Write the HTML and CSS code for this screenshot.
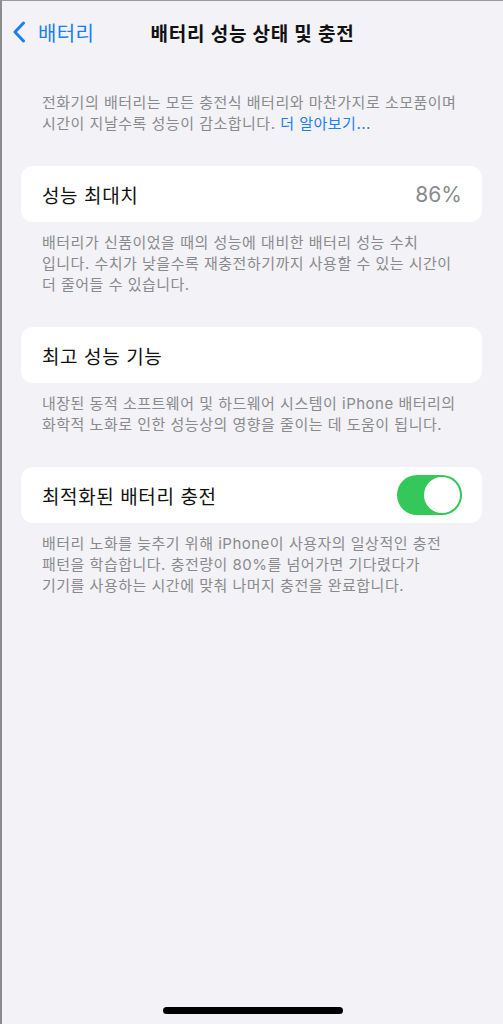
FILE: index.html
```html
<!DOCTYPE html>
<html lang="ko">
<head>
<meta charset="utf-8">
<link rel="stylesheet" href="styles.css">
</head>
<body>
<div class="screen">
  <header class="nav">
    <a class="back">
      <svg class="chev" width="14" height="22" viewBox="0 0 14 22"><path d="M11.5 2 L3 11 L11.5 20" fill="none" stroke="#1a7ff2" stroke-width="3" stroke-linecap="round" stroke-linejoin="round"/></svg>
      <span>배터리</span>
    </a>
    <h1 class="title">배터리 성능 상태 및 충전</h1>
    <div></div>
  </header>
  <main class="content">
    <p class="note intro">전화기의 배터리는 모든 충전식 배터리와 마찬가지로 소모품이며<br>시간이 지날수록 성능이 감소합니다. <span class="link">더 알아보기...</span></p>

    <div class="card">
      <span class="label">성능 최대치</span>
      <span class="value">86%</span>
    </div>
    <p class="note">배터리가 신품이었을 때의 성능에 대비한 배터리 성능 수치<br>입니다. 수치가 낮을수록 재충전하기까지 사용할 수 있는 시간이<br>더 줄어들 수 있습니다.</p>

    <div class="card">
      <span class="label">최고 성능 기능</span>
    </div>
    <p class="note">내장된 동적 소프트웨어 및 하드웨어 시스템이 iPhone 배터리의<br>화학적 노화로 인한 성능상의 영향을 줄이는 데 도움이 됩니다.</p>

    <div class="card">
      <span class="label">최적화된 배터리 충전</span>
      <span class="toggle"><span class="knob"></span></span>
    </div>
    <p class="note">배터리 노화를 늦추기 위해 iPhone이 사용자의 일상적인 충전<br>패턴을 학습합니다. 충전량이 80%를 넘어가면 기다렸다가<br>기기를 사용하는 시간에 맞춰 나머지 충전을 완료합니다.</p>
  </main>
  <div class="home"></div>
</div>
</body>
</html>
```
FILE: styles.css
```css
* { box-sizing: border-box; }
html, body { margin: 0; padding: 0; }
body {
  width: 503px;
  height: 1024px;
  overflow: hidden;
  font-family: Inter, "Noto Sans CJK KR", "Noto Sans", sans-serif;
  background: #f2f2f7;
}
.screen {
  height: 1024px;
  background: #f2f2f7;
  border-left: 2px solid #8c8c8c;
  border-top: 1px solid #9a9a9a;
  display: flex;
  flex-direction: column;
}
.nav {
  display: grid;
  grid-template-columns: 1fr auto 1fr;
  align-items: center;
  height: 62px;
  padding: 0 10px 0 10px;
}
.back {
  display: flex;
  align-items: center;
  gap: 12px;
  color: #1a7ff2;
  font-size: 20px;
  letter-spacing: 0.3px;
}
.chev { display: block; }
.title {
  margin: 0;
  font-size: 19px;
  font-weight: 700;
  color: #111;
  letter-spacing: 0.8px;
}
.content {
  flex: 1;
  padding: 0 21px 0 19px;
}
.note {
  margin: 0;
  padding: 0 0 0 21px;
  font-size: 15px;
  line-height: 21px;
  color: #8a8a8e;
  letter-spacing: 0.5px;
  white-space: nowrap;
}
.intro { margin-top: 29px; }
.link { color: #1a7ff2; }
.card {
  margin-top: 32px;
  margin-bottom: 10px;
  height: 56px;
  background: #fff;
  border-radius: 12px;
  display: flex;
  align-items: center;
  justify-content: space-between;
  padding: 0 20px 0 21px;
}
.label {
  font-size: 19px;
  color: #111;
  letter-spacing: 0.6px;
}
.value {
  font-size: 21px;
  color: #8a8a8e;
}
.toggle {
  width: 65px;
  height: 40px;
  border-radius: 20px;
  background: #34c759;
  display: flex;
  align-items: center;
  justify-content: flex-end;
  padding: 2px;
}
.knob {
  width: 36px;
  height: 36px;
  border-radius: 50%;
  background: #fff;
}
.home {
  align-self: center;
  width: 180px;
  height: 7px;
  border-radius: 4px;
  background: #000;
  margin-bottom: 10px;
}
```
